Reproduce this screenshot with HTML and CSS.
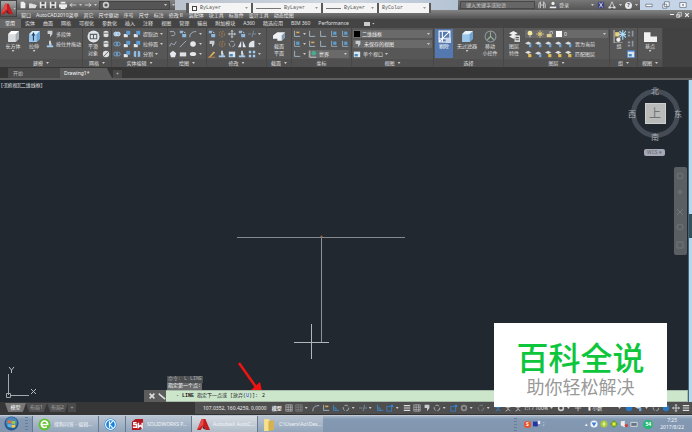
FILE: index.html
```
<!DOCTYPE html>
<html lang="zh-CN">
<head>
<meta charset="UTF-8">
<title>AutoCAD - Drawing1</title>
<link rel="stylesheet" href="styles.css">
</head>
<body>

<!-- 图标 -->
<svg class="symbols" xmlns="http://www.w3.org/2000/svg">
    <symbol id="cube" viewBox="0 0 12 12"><path d="M1 4l3-3h7v7l-3 3H1z" fill="#d9dde0"/><path d="M1 4l3-3h7L8 4z" fill="#fff"/><path d="M8 4l3-3v7l-3 3z" fill="#a9b0b6"/></symbol>
    <symbol id="bluecube" viewBox="0 0 12 12"><path d="M1 4l3-3h7v7l-3 3H1z" fill="#9cc7eb"/><path d="M1 4l3-3h7L8 4z" fill="#e8f4fc"/><path d="M8 4l3-3v7l-3 3z" fill="#6fa2d0"/></symbol>
    <symbol id="extrude" viewBox="0 0 12 12"><path d="M1 4l3-3h7v7l-3 3H1z" fill="#9cc7eb"/><path d="M1 4l3-3h7L8 4z" fill="#d8ecfa"/><path d="M8 4l3-3v7l-3 3z" fill="#6fa2d0"/><path d="M5 10V4M4 5l1-2 1 2" stroke="#1d3f66" fill="none"/></symbol>
    <symbol id="sphere" viewBox="0 0 12 12"><circle cx="6" cy="6" r="5.500" fill="#e4e7e8"/><path d="M3 4h6v4H3zM6 4v4" fill="none" stroke="#59626b"/></symbol>
    <symbol id="ball" viewBox="0 0 10 10"><path d="M2 2l3-1 3 1v6L5 9 2 8z" fill="#dedfdf"/><path d="M2 4h6" stroke="#555"/></symbol>
    <symbol id="noball" viewBox="0 0 10 10"><circle cx="5" cy="5" r="4" fill="#dedfdf"/><path d="M2 8l6-6" stroke="#555"/></symbol>
    <symbol id="polysolid" viewBox="0 0 10 10"><path d="M2 1h6v4L5 9V5H2z" fill="#c8cdd1"/></symbol>
    <symbol id="press" viewBox="0 0 10 10"><path d="M1 7h8v2H1zM4 4h3v3H4z" fill="#a9c9e6"/><path d="M5 1v4" stroke="#eee" stroke-width="2"/></symbol>
    <symbol id="union" viewBox="0 0 10 10"><circle cx="3.5" cy="5" r="2.5" fill="#9dc3e6" stroke="#d7e8f5"/><circle cx="6.5" cy="5" r="2.5" fill="#9dc3e6" stroke="#d7e8f5"/></symbol>
    <symbol id="rings" viewBox="0 0 10 10"><circle cx="3.5" cy="5" r="2.5" fill="none" stroke="#78aede"/><circle cx="6.5" cy="5" r="2.5" fill="none" stroke="#78aede"/></symbol>
    <symbol id="solid" viewBox="0 0 10 10"><path d="M1 5h5v4H1z" fill="#e4e4e4"/><path d="M4 1h5v5H4z" fill="#5d9bd4"/></symbol>
    <symbol id="split" viewBox="0 0 10 10"><path d="M1 2l3-1v8L1 8zM6 1l3 1v6L6 9z" fill="#8fbde5"/></symbol>
    <symbol id="curve" viewBox="0 0 10 10"><path d="M1 2h5a3 3 0 010 5H3" fill="none" stroke="#b5c3ce"/></symbol>
    <symbol id="spline" viewBox="0 0 10 10"><path d="M1 8C3-2 5 12 9 2" fill="none" stroke="#b5c3ce"/></symbol>
    <symbol id="line" viewBox="0 0 10 10"><path d="M1 9l8-8" stroke="#aebdca"/></symbol>
    <symbol id="arc" viewBox="0 0 10 10"><path d="M1 9c0-5 3-7 8-7" fill="none" stroke="#b9cbdc"/></symbol>
    <symbol id="disc" viewBox="0 0 10 10"><circle cx="5" cy="5" r="3.5" fill="#e6e9eb"/></symbol>
    <symbol id="oval" viewBox="0 0 10 10"><ellipse cx="5" cy="5" rx="4" ry="2.5" fill="#e6e9eb"/></symbol>
    <symbol id="rect" viewBox="0 0 10 10"><path d="M1 3h8v5H1z" fill="#dfe3e6"/></symbol>
    <symbol id="penta" viewBox="0 0 10 10"><path d="M5 1l4 3-1.500 5h-5L1 4z" fill="#e6e9eb"/></symbol>
    <symbol id="helix" viewBox="0 0 10 10"><path d="M1 1h4v3H1zM4 5h5v4H4z" fill="#8db9df"/><path d="M6 2l2 2" stroke="#ddd"/></symbol>
    <symbol id="move" viewBox="0 0 10 10"><path d="M5 0l2 2H3zM5 10l2-2H3zM0 5l2-2v4zM10 5L8 3v4z" fill="#dce5ec"/><path d="M5 2v6M2 5h6" stroke="#dce5ec"/></symbol>
    <symbol id="rotate" viewBox="0 0 10 10"><circle cx="5" cy="5" r="3.500" fill="none" stroke="#b6bfc6" stroke-dasharray="5 2"/></symbol>
    <symbol id="warm" viewBox="0 0 10 10"><circle cx="5" cy="5" r="3.500" fill="none" stroke="#9a7f55" stroke-dasharray="3 1"/><path d="M5 3v4" stroke="#cf7a3c"/></symbol>
    <symbol id="pencil" viewBox="0 0 10 10"><path d="M1 9l6-7 2 1-6 6z" fill="#e0b65c"/><path d="M0 9h9" stroke="#cf8a49"/></symbol>
    <symbol id="mirror" viewBox="0 0 10 10"><path d="M4 1v8H0zM6 1v8h4z" fill="#dfeaf4"/></symbol>
    <symbol id="fillet" viewBox="0 0 10 10"><path d="M1 9V7c0-4 3-6 7-6v8z" fill="#dfe5ea"/></symbol>
    <symbol id="array" viewBox="0 0 10 10"><path d="M1 1h3v3H1zM6 1h3v3H6zM1 6h3v3H1zM6 6h3v3H6z" fill="#a3cdf0"/></symbol>
    <symbol id="scale" viewBox="0 0 10 10"><path d="M1 2h8v7H1z" fill="#d9e6ef"/><path d="M2 5h4v3H2z" fill="#4a87bd"/></symbol>
    <symbol id="trim" viewBox="0 0 10 10"><path d="M0 5h4M6 5h4M7 1L5 9" stroke="#7d95a7" fill="none"/></symbol>
    <symbol id="section" viewBox="0 0 12 12"><path d="M0 5l4-3h7v5L8 10H4V8H0z" fill="#eff2f4"/><path d="M8 5l3-3v5l-3 3z" fill="#7f9aae"/></symbol>
    <symbol id="ucs" viewBox="0 0 10 10"><path d="M2 1v7h7" fill="none" stroke="#b0c4d3"/></symbol>
    <symbol id="ucsy" viewBox="0 0 10 10"><path d="M2 1v7h7" fill="none" stroke="#b0c4d3"/><path d="M4 2h4v2H4z" fill="#d9a957"/></symbol>
    <symbol id="ucsb" viewBox="0 0 10 10"><path d="M2 1v7h7" fill="none" stroke="#9eb6c8"/><path d="M4 2h4v4H4z" fill="#5b9fd2"/></symbol>
    <symbol id="world" viewBox="0 0 10 10"><path d="M1 1v8h8" fill="none" stroke="#ddd"/><circle cx="6" cy="4" r="3" fill="#4aa88d"/></symbol>
    <symbol id="cull" viewBox="0 0 12 12"><path d="M1 1h10v10H1zM1 11L11 1M4 1v10M1 8h10" fill="none" stroke="#fff"/><path d="M7 7h5v5H7z" fill="#c8d8ea"/></symbol>
    <symbol id="gizmo" viewBox="0 0 12 12"><circle cx="6" cy="6" r="5" fill="none" stroke="#8c969b"/><path d="M6 2v4l3 3M6 6L3 9" fill="none" stroke="#8fb39c"/></symbol>
    <symbol id="layers" viewBox="0 0 12 12"><path d="M1 3l4-2 4 2-4 2zM1 6l4-2 4 2-4 2z" fill="#f0f0f0"/><path d="M6 5h5v6H6z" fill="#ddd"/><path d="M7 7h3M7 9h3" stroke="#555"/></symbol>
    <symbol id="layer" viewBox="0 0 10 10"><path d="M0 4l4-2 4 2-4 2z" fill="#d7dce0"/><path d="M5 5h3v4H5z" fill="#6ea4d6"/></symbol>
    <symbol id="layery" viewBox="0 0 10 10"><path d="M0 3l4-2 4 2-4 2z" fill="#dedede"/><path d="M4 5h4v4H4z" fill="#dfbb56"/></symbol>
    <symbol id="bulb" viewBox="0 0 10 10"><circle cx="5" cy="4" r="3" fill="#f5e6a0"/><path d="M4 7h2v2H4z" fill="#aaa"/></symbol>
    <symbol id="sun" viewBox="0 0 10 10"><circle cx="5" cy="5" r="2" fill="#f7e490"/><path d="M5 0v10M0 5h10M2 2l6 6M8 2L2 8" stroke="#d8c677"/></symbol>
    <symbol id="lock" viewBox="0 0 10 10"><path d="M1 5h6v4H1z" fill="#e0cf8e"/><path d="M5 5V2h3v3" fill="none" stroke="#ccc"/></symbol>
    <symbol id="group" viewBox="0 0 12 12"><path d="M1 0v12h8" fill="none" stroke="#bbb"/><path d="M2 2h4v4H2z" fill="#ead17b"/><circle cx="5" cy="9" r="2" fill="#eee"/><path d="M9 0v9M5 4h7M6 1l6 6M12 1L6 7" stroke="#a9dcfb"/></symbol>
    <symbol id="ungroup" viewBox="0 0 10 10"><path d="M1 2h3v2H1zM1 6h3v2H1zM6 1h2v7H6z" fill="#8d9aa5"/></symbol>
    <symbol id="base" viewBox="0 0 12 12"><path d="M0 2h6v4h6v5H0z" fill="#f0f0f0"/></symbol>
    <symbol id="page" viewBox="0 0 10 10"><path d="M2 1h4l2 2v6H2z" fill="#eee"/></symbol>
    <symbol id="open" viewBox="0 0 10 10"><path d="M0 3h4l1 1h3v1h2L8 9H0z" fill="#ddd"/></symbol>
    <symbol id="save" viewBox="0 0 10 10"><path d="M1 1h8v8H1z" fill="#e8e8e8"/><path d="M3 1h4v3H3zM3 6h4v3H3z" fill="#555"/></symbol>
    <symbol id="print" viewBox="0 0 10 10"><path d="M0 4h10v4H0zM2 1h6v2H2zM2 7h6v3H2z" fill="#eee"/></symbol>
    <symbol id="undo" viewBox="0 0 10 10"><path d="M2 5h7M4 3L1 5l3 2" stroke="#ddd" fill="none"/></symbol>
    <symbol id="redo" viewBox="0 0 10 10"><path d="M1 5h7M6 3l3 2-3 2" stroke="#ddd" fill="none"/></symbol>
    <symbol id="cog" viewBox="0 0 10 10"><circle cx="5" cy="5" r="3" fill="none" stroke="#ccc" stroke-width="2"/></symbol>
    <symbol id="grid" viewBox="0 0 10 10"><path d="M1 1h8v8H1zM4 1v8M7 1v8M1 4h8M1 7h8" fill="none" stroke="#aaa"/></symbol>
    <symbol id="snap" viewBox="0 0 10 10"><path d="M1 3h6v6H1z" fill="none" stroke="#3287ce"/><path d="M6 1h3v3H6z" fill="#3287ce"/></symbol>
    <symbol id="ortho" viewBox="0 0 10 10"><path d="M2 1v7h7M2 5h3v3" fill="none" stroke="#3b8fd6"/></symbol>
    <symbol id="bars" viewBox="0 0 10 10"><path d="M1 2h8M1 5h8M1 8h8" stroke="#ddd" stroke-width="1.500"/></symbol>
    <symbol id="man" viewBox="0 0 10 10"><circle cx="5" cy="2" r="1.500" fill="#ccc"/><path d="M5 4v3L2 9M5 6l3 3M2 4h6" stroke="#ccc" fill="none"/></symbol>
    <symbol id="manb" viewBox="0 0 10 10"><circle cx="5" cy="2" r="1.500" fill="#2f91e6"/><path d="M5 4v3L2 9M5 6l3 3M2 4h6" stroke="#2f91e6" fill="none"/></symbol>
    <symbol id="bluedot" viewBox="0 0 10 10"><circle cx="5" cy="5" r="4" fill="#2878c4"/></symbol>
    <symbol id="plus" viewBox="0 0 10 10"><path d="M5 1v8M1 5h8" stroke="#ccc"/></symbol>
    <symbol id="cross" viewBox="0 0 10 10"><path d="M2 2l6 6M8 2L2 8" stroke="currentColor" stroke-width="2"/></symbol>
    <symbol id="wrench" viewBox="0 0 10 10"><path d="M1 2l2 2 6 5" stroke="#ddd" stroke-width="2" fill="none"/></symbol>
    <symbol id="acad" viewBox="0 0 14 14"><path d="M5 1h4l5 12h-4L7 8l-3 5H0z" fill="#c41d20"/><path d="M5 1h2v6l-7 6z" fill="#e6494a"/><path d="M7 8l3 5-4-2z" fill="#7d0d10"/></symbol>
</svg>

<header class="titlebar">
    <div class="quick">
        <svg class="ic"><use href="#page"/></svg>
        <svg class="ic"><use href="#open"/></svg>
        <svg class="ic"><use href="#save"/></svg>
        <svg class="ic"><use href="#save"/></svg>
        <svg class="ic"><use href="#print"/></svg>
        <svg class="ic"><use href="#undo"/></svg><i class="caret"></i>
        <svg class="ic"><use href="#redo"/></svg><i class="caret"></i>
        <div class="workspace"><svg class="ic"><use href="#cog"/></svg><i class="caret"></i></div>
        <i class="caret"></i>
    </div>
    <div class="glass"></div>
    <div class="account">
        <input class="search" type="text" placeholder="键入关键字或短语" aria-label="搜索">
        <svg class="ic" viewBox="0 0 10 10"><path d="M1 9V4l2-3v8M9 9V4L7 1v8M3 5h4" fill="none" stroke="#ddd"/></svg>
        <button class="login"><svg class="ic" viewBox="0 0 10 10"><circle cx="5" cy="3" r="2" fill="#eee"/><path d="M1 9V7h8v2z" fill="#eee"/></svg>登录</button>
        <i class="caret push"></i>
        <svg class="ic" viewBox="0 0 10 10"><path d="M1 1h8v8H1z" fill="#3d4380"/><path d="M3 2l4 6M7 2L3 8" stroke="#eee"/></svg>
        <svg class="ic" viewBox="0 0 10 10"><path d="M5 1L2 8h6z" fill="none" stroke="#ddd"/><circle cx="2" cy="8" r="1.500" fill="#ddd"/><circle cx="8" cy="8" r="1.500" fill="#ddd"/></svg>
        <i class="caret"></i>
        <span class="help">?</span>
        <i class="caret"></i>
    </div>
    <div class="winbtns">
        <button aria-label="最小化"><svg class="ic" viewBox="0 0 10 10"><path d="M1 4h8v3H1z" fill="#fff" stroke="#647386"/></svg></button>
        <button aria-label="还原"><svg class="ic" viewBox="0 0 10 10"><path d="M3 1h6v6H3zM1 4h5v5H1z" fill="#fff" stroke="#647386"/></svg></button>
        <button aria-label="关闭"><svg class="ic" viewBox="0 0 10 10"><path d="M1 2h8v6H1zM4 4l2 2M6 4L4 6" fill="#fff" stroke="#647386"/></svg></button>
    </div>
</header>
<button class="applogo" aria-label="应用程序菜单"><svg viewBox="0 0 14 14"><use href="#acad"/></svg><i class="caret"></i></button>

<!-- 浮动特性工具栏 -->
<div class="proptools">
    <label class="prop layer-color"><i class="swatch"></i><select aria-label="颜色"><option>ByLayer</option></select></label>
    <label class="prop linetype"><i class="rule"></i><select aria-label="线型"><option>ByLayer</option></select></label>
    <label class="prop lineweight"><i class="rule"></i><select aria-label="线宽"><option>ByLayer</option></select></label>
    <label class="prop plot"><select aria-label="打印样式"><option>ByColor</option></select></label>
</div>

<nav class="menubar">
    <a href="#">窗口</a><a href="#">AutoCAD2010菜单</a><a href="#">其它</a><a href="#">尺寸驱动</a><a href="#">序号</a><a href="#">尺寸</a><a href="#">标注</a><a href="#">修改Ⅱ</a><a href="#">装配体</a><a href="#">块工具</a><a href="#">标准件</a><a href="#">设计工具</a><a href="#">动态绘图</a>
    <span class="docbtns"><i class="min"></i><svg class="ic" viewBox="0 0 10 10"><path d="M3 1h6v6H3zM1 4h5v5H1z" fill="#777" stroke="#eee"/></svg><svg class="ic"><use href="#cross"/></svg></span>
</nav>

<nav class="tabs">
    <a class="active" href="#">常用</a><a href="#">实体</a><a href="#">曲面</a><a href="#">网格</a><a href="#">可视化</a><a href="#">参数化</a><a href="#">插入</a><a href="#">注释</a><a href="#">视图</a><a href="#">管理</a><a href="#">输出</a><a href="#">附加模块</a><a href="#">A360</a><a href="#">精选应用</a><a href="#">BIM 360</a><a href="#">Performance</a>
    <span class="pill"></span><i class="caret"></i>
</nav>

<main class="ribbon">
    <section class="panel p-model">
        <div class="tools">
            <button class="big"><svg><use href="#cube"/></svg>长方体<i class="caret"></i></button>
            <button class="big"><svg><use href="#extrude"/></svg>拉伸<i class="caret"></i></button>
            <div class="col">
                <button class="tool"><svg class="ic"><use href="#polysolid"/></svg>多段体</button>
                <button class="tool"><svg class="ic"><use href="#press"/></svg>按住并拖动</button>
            </div>
        </div>
        <h2>建模<i class="caret"></i></h2>
    </section>
    <section class="panel p-mesh">
        <div class="tools">
            <button class="big"><svg><use href="#sphere"/></svg>平滑<br>对象</button>
            <div class="col">
                <svg class="ic"><use href="#ball"/></svg>
                <svg class="ic"><use href="#ball"/></svg>
                <svg class="ic"><use href="#noball"/></svg>
            </div>
        </div>
        <h2>网格<i class="caret"></i></h2>
    </section>
    <section class="panel p-solid">
        <div class="tools">
            <div class="col"><svg class="ic"><use href="#union"/></svg><svg class="ic"><use href="#rings"/></svg><svg class="ic"><use href="#rings"/></svg></div>
            <div class="col"><svg class="ic"><use href="#solid"/></svg><svg class="ic"><use href="#solid"/></svg><svg class="ic"><use href="#solid"/></svg></div>
            <div class="col">
                <button class="tool"><svg class="ic"><use href="#solid"/></svg>提取边<i class="caret"></i></button>
                <button class="tool"><svg class="ic"><use href="#solid"/></svg>拉伸面<i class="caret"></i></button>
                <button class="tool"><svg class="ic"><use href="#split"/></svg>分割<i class="caret"></i></button>
            </div>
        </div>
        <h2>实体编辑<i class="caret"></i></h2>
    </section>
    <section class="panel p-draw">
        <div class="tools">
            <div class="col"><svg class="ic"><use href="#curve"/></svg><svg class="ic"><use href="#spline"/></svg><svg class="ic"><use href="#penta"/></svg></div>
            <div class="col"><svg class="ic"><use href="#helix"/></svg><svg class="ic"><use href="#line"/></svg><svg class="ic"><use href="#rect"/></svg></div>
            <div class="col"><svg class="ic"><use href="#arc"/></svg><svg class="ic"><use href="#disc"/></svg><svg class="ic"><use href="#oval"/></svg></div>
            <div class="col carets"><i class="caret"></i><i class="caret"></i><i class="caret"></i></div>
        </div>
        <h2>绘图<i class="caret"></i></h2>
    </section>
    <section class="panel p-modify">
        <div class="tools">
            <div class="col"><svg class="ic"><use href="#helix"/></svg><svg class="ic"><use href="#polysolid"/></svg><svg class="ic"><use href="#pencil"/></svg></div>
            <div class="col"><svg class="ic"><use href="#warm"/></svg><svg class="ic"><use href="#warm"/></svg><svg class="ic"><use href="#press"/></svg></div>
            <div class="col"><svg class="ic"><use href="#move"/></svg><svg class="ic"><use href="#rotate"/></svg><svg class="ic"><use href="#scale"/></svg></div>
            <div class="col"><svg class="ic"><use href="#helix"/></svg><svg class="ic"><use href="#mirror"/></svg><svg class="ic"><use href="#press"/></svg></div>
            <div class="col"><svg class="ic"><use href="#trim"/></svg><svg class="ic"><use href="#fillet"/></svg><svg class="ic"><use href="#array"/></svg></div>
            <div class="col carets"><i class="caret"></i><i class="caret"></i><i class="caret"></i></div>
        </div>
        <h2>修改<i class="caret"></i></h2>
    </section>
    <section class="panel p-section">
        <div class="tools"><button class="big"><svg><use href="#section"/></svg>截面<br>平面</button></div>
        <h2>截面<i class="caret"></i></h2>
    </section>
    <section class="panel p-ucs">
        <div class="tools">
            <div class="col"><svg class="ic"><use href="#ucsy"/></svg><svg class="ic"><use href="#ucsb"/></svg><svg class="ic"><use href="#ucs"/></svg></div>
            <div class="col carets"><i class="caret"></i><i class="caret"></i><i class="caret"></i></div>
            <div class="col">
                <div class="icons"><svg class="ic"><use href="#ucs"/></svg><svg class="ic"><use href="#ucs"/></svg><svg class="ic"><use href="#ucsb"/></svg><svg class="ic"><use href="#ucsb"/></svg></div>
                <div class="icons"><svg class="ic"><use href="#ucsy"/></svg><svg class="ic"><use href="#ucs"/></svg><svg class="ic"><use href="#ucsb"/></svg><svg class="ic"><use href="#ucsb"/></svg></div>
                <label class="combo"><svg class="ic"><use href="#world"/></svg><select aria-label="坐标系"><option>世界</option></select><i class="caret"></i></label>
            </div>
        </div>
        <h2>坐标</h2>
    </section>
    <section class="panel p-view">
        <div class="tools">
            <div class="col">
                <label class="combo"><i class="black"></i><select aria-label="视觉样式"><option>二维线框</option></select><i class="caret"></i></label>
                <label class="combo"><svg class="ic"><use href="#polysolid"/></svg><select aria-label="视图"><option>未保存的视图</option></select><i class="caret"></i></label>
                <button class="tool"><svg class="ic"><use href="#scale"/></svg>单个视口<i class="caret"></i></button>
            </div>
        </div>
        <h2>视图<i class="caret"></i></h2>
    </section>
    <section class="panel p-select">
        <div class="tools">
            <button class="big on"><svg><use href="#cull"/></svg>剔除</button>
            <button class="big"><svg><use href="#bluecube"/></svg>无过滤器<i class="caret"></i></button>
            <button class="big"><svg><use href="#gizmo"/></svg>移动<br>小控件</button>
        </div>
        <h2>选择</h2>
    </section>
    <section class="panel p-layer">
        <div class="tools">
            <button class="big"><svg><use href="#layers"/></svg>图层<br>特性</button>
            <div class="col">
                <label class="combo"><svg class="ic"><use href="#bulb"/></svg><svg class="ic"><use href="#sun"/></svg><svg class="ic"><use href="#lock"/></svg><i class="white"></i><select aria-label="图层"><option>0</option></select><i class="caret"></i></label>
                <div class="icons"><svg class="ic"><use href="#layer"/></svg><svg class="ic"><use href="#layer"/></svg><svg class="ic"><use href="#layer"/></svg><svg class="ic"><use href="#layer"/></svg><button class="tool"><svg class="ic"><use href="#layer"/></svg>置为当前</button></div>
                <div class="icons"><svg class="ic"><use href="#layery"/></svg><svg class="ic"><use href="#layer"/></svg><svg class="ic"><use href="#layery"/></svg><svg class="ic"><use href="#layery"/></svg><button class="tool"><svg class="ic"><use href="#layery"/></svg>匹配图层</button></div>
            </div>
        </div>
        <h2>图层<i class="caret"></i></h2>
    </section>
    <section class="panel p-group">
        <div class="tools">
            <button class="big"><svg><use href="#group"/></svg>组</button>
            <div class="col"><svg class="ic"><use href="#ungroup"/></svg><svg class="ic"><use href="#ungroup"/></svg><svg class="ic lit"><use href="#scale"/></svg></div>
        </div>
        <h2>组<i class="caret"></i></h2>
    </section>
    <section class="panel p-base">
        <div class="tools"><button class="big"><svg><use href="#base"/></svg>基点<i class="caret"></i></button></div>
        <h2>视图<i class="caret"></i></h2>
    </section>
</main>

<nav class="filetabs">
    <a href="#">开始</a>
    <a class="active" href="#">Drawing1*</a>
    <button class="addtab" aria-label="新图形">+</button>
</nav>

<!-- 绘图区 -->
<div class="canvas">
    <span class="viewlabel">[-][俯视][二维线框]</span>
    <svg class="drawing" viewBox="0 0 692 323">
        <path d="M237 158.500h168" stroke="#858a8e"/>
        <path d="M321.500 157v106" stroke="#8d9296"/>
        <path d="M294 263.500h35M311.500 245v35" stroke="#b3b7ba"/>
        <circle cx="321.500" cy="157.500" r="1" fill="#a8653f"/>
        <path d="M8.500 295v21M11 316.500h18M6.500 314.500h4v4h-4z" stroke="#a5a9ad" fill="none"/>
        <path d="M9 288l2.500 3 2.500-3M11.500 291v3M31 310l5 5M36 310l-5 5" stroke="#b9bcbf" fill="none"/>
        <path d="M239 284l17 24" stroke="#f01410" stroke-width="2.500"/>
        <path d="M263 317l-12-6 9-8z" fill="#f01410"/>
    </svg>
    <div class="viewcube">
        <i class="ring"></i>
        <span class="n">北</span><span class="w">西</span><button class="top">上</button><span class="e">东</span><span class="s">南</span>
    </div>
    <button class="wcs">WCS ▾</button>
    <div class="navbar"><svg viewBox="0 0 12 88"><path d="M3 9a3 3 0 116 0 3 3 0 11-6 0M3 25h6M6 22v6M3 42l6 6M9 42l-6 6M3 60a3 3 0 116 0 3 3 0 11-6 0M3 75h6v6H3z" fill="none" stroke="#71767b"/></svg></div>
    <div class="scroll"><i></i></div>
    <div class="history"><span>命令: L LINE</span><span>指定第一个点:</span></div>
    <div class="command">
        <div class="grip"><svg class="ic"><use href="#cross"/></svg><svg class="ic"><use href="#wrench"/></svg></div>
        <label for="cmd">- <b>LINE</b> 指定下一点或 [放弃(<em>U</em>)]:</label>
        <input id="cmd" type="text" value="2">
    </div>
</div>

<footer class="statusbar">
    <nav class="layouts"><a class="active" href="#">模型</a><a href="#">布局1</a><a href="#">布局2</a><button aria-label="新建布局">+</button></nav>
    <div class="status">
        <span class="coords">107.0352, 160.4259, 0.0000</span>
        <button class="model">模型</button>
        <svg class="ic"><use href="#grid"/></svg><svg class="ic dim"><use href="#grid"/></svg><i class="caret"></i>
        <svg class="ic"><use href="#arc"/></svg><svg class="ic"><use href="#ucsy"/></svg>
        <svg class="ic"><use href="#ortho"/></svg><svg class="ic"><use href="#rotate"/></svg><i class="caret"></i>
        <svg class="ic"><use href="#trim"/></svg><i class="caret"></i>
        <svg class="ic"><use href="#ortho"/></svg><svg class="ic"><use href="#snap"/></svg><i class="caret"></i>
        <svg class="ic"><use href="#bars"/></svg><svg class="ic"><use href="#grid"/></svg><svg class="ic"><use href="#polysolid"/></svg><svg class="ic"><use href="#rotate"/></svg><i class="caret"></i>
        <svg class="ic"><use href="#snap"/></svg><svg class="ic dim"><use href="#cog"/></svg><i class="caret"></i><svg class="ic dim"><use href="#rotate"/></svg><i class="caret"></i>
        <svg class="ic"><use href="#manb"/></svg><svg class="ic"><use href="#man"/></svg><svg class="ic"><use href="#man"/></svg>
        <span>1:1 / 100%</span><i class="caret"></i>
        <svg class="ic"><use href="#cog"/></svg><i class="caret"></i><svg class="ic"><use href="#plus"/></svg>
        <span class="units">▮ 小数</span><i class="caret push"></i>
        <svg class="ic"><use href="#bluedot"/></svg><svg class="ic"><use href="#layer"/></svg><i class="caret"></i><svg class="ic"><use href="#rotate"/></svg><svg class="ic"><use href="#bluedot"/></svg><svg class="ic"><use href="#move"/></svg><svg class="ic"><use href="#bars"/></svg>
    </div>
</footer>

<div class="taskbar">
    <button class="start" aria-label="开始"><svg viewBox="0 0 16 16"><circle cx="8" cy="8" r="7.500" fill="#28588b"/><circle cx="8" cy="7" r="6" fill="#4c86b8"/><path d="M4 5q2-1 3.500 0v3Q6 7 4 8z" fill="#ef6b35"/><path d="M8 5q2 1 4 0v3q-2 1-4 0z" fill="#9ccc4b"/><path d="M4 9q2-1 3.500 0v3Q6 11 4 12z" fill="#57b4ec"/><path d="M8 9q2 1 4 0v3q-2 1-4 0z" fill="#f7cf46"/></svg></button>
    <i class="dots"></i>
    <button class="task"><svg viewBox="0 0 12 12"><circle cx="6" cy="6" r="5.500" fill="#5fc32f"/><path d="M3 6h6a3 3 0 10-1 2" fill="none" stroke="#fff" stroke-width="1.500"/></svg>搜狗问答 - 编辑...</button>
    <button class="task pinned"><svg viewBox="0 0 12 12"><circle cx="6" cy="6" r="5.500" fill="#1683e0"/><circle cx="6" cy="6" r="4.500" fill="none" stroke="#fff"/><path d="M5 3v6M8 3L5 6l3 3" fill="none" stroke="#fff"/></svg></button>
    <button class="task"><svg viewBox="0 0 14 12"><path d="M1 3l4-3h8v8l-3 4H1z" fill="#b31820"/><path d="M6 4H3v2h3v3H2M8 4v5l2-2 2 2V4" fill="none" stroke="#fff" stroke-width="1.500"/></svg>SOLIDWORKS P...</button>
    <button class="task lit"><svg viewBox="0 0 14 14"><use href="#acad"/></svg>Autodesk AutoC...</button>
    <button class="task"><svg viewBox="0 0 12 12"><path d="M1 1h5v11H1z" fill="#f6e08d"/><path d="M5 3l5-1v9l-5 1z" fill="#d5b24e"/></svg>C:\Users\Ao\Des...</button>
    <div class="tray">
        <i class="dots"></i>
        <span class="lang">S</span>
        <svg class="ic" viewBox="0 0 10 10"><path d="M0 2h6v6H0z" fill="#2435a8"/><path d="M6 1h3v4H6z" fill="#e9eef8"/></svg>
        <span>⁝</span>
        <span class="push">▴</span>
        <svg class="ic" viewBox="0 0 10 10"><circle cx="5" cy="5" r="4.500" fill="#eef3f8"/><path d="M2 3l3 5 3-5z" fill="#3f7bda"/></svg>
        <svg class="ic" viewBox="0 0 10 10"><circle cx="5" cy="5" r="4.500" fill="#a7c933"/><path d="M5 2v6M3 5h4" stroke="#fff"/></svg>
        <svg class="ic" viewBox="0 0 10 10"><path d="M5 0l5 5-5 5-5-5z" fill="#58a524"/><path d="M3 3h4v4H3z" fill="#f2e34c"/></svg>
        <svg class="ic" viewBox="0 0 10 10"><path d="M1 2l5-1v8L1 7z" fill="#eee"/><circle cx="8" cy="7" r="2" fill="#d13a36"/></svg>
        <svg class="ic" viewBox="0 0 10 10"><path d="M1 3h8v5H1z" fill="#6b7683" stroke="#e5e9ee"/></svg>
        <span class="score">54</span>
        <time>7:25<br>2017/8/22</time>
    </div>
</div>

<div class="watermark">
    <strong>百科全说</strong>
    <span>助你轻松解决</span>
</div>

</body>
</html>
```

FILE: styles.css
```
* {
box-sizing: border-box;
}

body {
margin: 0;
height: 100vh;
display: flex;
flex-direction: column;
position: relative;
overflow: hidden;
background: #212830;
color: #e0e0e0;
font-family: "Noto Sans", "Noto Sans CJK SC", sans-serif;
font-size: 5px;
line-height: 8px;
white-space: nowrap;
}

a {
color: inherit;
text-decoration: none;
}

button, select, input {
margin: 0;
padding: 0;
border: none;
background: none;
color: inherit;
font: inherit;
appearance: none;
outline: none;
}

h2 {
margin: 0;
font-size: 5px;
font-weight: normal;
line-height: 8px;
}

.symbols {
position: absolute;
width: 0;
height: 0;
}

.ic {
width: 8px;
height: 8px;
flex: none;
}

.dim {
opacity: 0.5;
}

.push {
margin-left: auto;
}

.caret {
flex: none;
width: 3px;
height: 2px;
background: #c8c8c8;
clip-path: polygon(0 0, 100% 0, 50% 100%);
}

/* 标题栏 */
.titlebar {
display: flex;
flex: none;
height: 10px;
background: #606060;
}

.quick {
display: flex;
align-items: center;
gap: 2px;
width: 175px;
padding-left: 19px;
background: linear-gradient(#868686, #585858);
}

.workspace {
display: flex;
align-items: center;
justify-content: space-between;
flex: 1;
height: 9px;
padding: 0 2px;
border: 1px solid #444;
background: #555;
}

.glass {
flex: 1;
background: linear-gradient(90deg, #b9c2cd, #d0d8e2 60%, #b4c3d4);
}

.account {
display: flex;
align-items: center;
gap: 3px;
width: 182px;
padding: 0 2px;
background: linear-gradient(#777, #555);
}

.search {
width: 75px;
height: 8px;
padding-left: 5px;
background: #666;
border: 1px solid #484848;
}

.search::placeholder {
color: #ccc;
}

.login {
display: flex;
gap: 2px;
}

.help {
width: 7px;
height: 7px;
border-radius: 4px;
background: #e8e8e8;
color: #35435a;
font-weight: bold;
line-height: 7px;
text-align: center;
}

.winbtns {
display: flex;
width: 52px;
justify-content: space-around;
background: #c5d5e7;
}

.winbtns button {
display: flex;
align-items: center;
}

.applogo {
position: absolute;
left: 0;
top: 0;
width: 17px;
height: 17px;
display: flex;
align-items: center;
background: linear-gradient(#aaa, #555);
border: 1px solid #444;
}

.applogo svg {
width: 12px;
height: 12px;
}

/* 浮动工具栏 */
.proptools {
position: absolute;
left: 186px;
top: 3px;
display: flex;
gap: 2px;
padding: 0 2px 0 3px;
background: #5a5a5a;
color: #555;
font-family: "Liberation Mono", monospace;
}

.prop {
display: flex;
align-items: center;
gap: 3px;
height: 10px;
padding: 0 3px;
background: #f4f4f4;
}

.prop select {
flex: 1;
min-width: 0;
}

.prop::after {
content: "";
width: 3px;
height: 2px;
background: #999;
clip-path: polygon(0 0, 100% 0, 50% 100%);
}

.swatch {
width: 5px;
height: 5px;
border: 1px solid #444;
background: #fff;
}

.rule {
width: 25px;
height: 1px;
background: #777;
}

.layer-color {
width: 62px;
}

.linetype {
width: 68px;
}

.lineweight {
width: 54px;
}

.lineweight .rule {
width: 15px;
}

.plot {
width: 50px;
}

/* 菜单栏 */
.menubar {
display: flex;
align-items: center;
gap: 5px;
flex: none;
height: 9px;
padding-left: 21px;
background: linear-gradient(#848484, #505050);
color: #eee;
}

.docbtns {
display: flex;
align-items: center;
gap: 2px;
margin-left: auto;
padding-right: 2px;
}

.docbtns .ic {
width: 6px;
height: 6px;
}

.min {
width: 4px;
height: 1px;
background: #eee;
}

/* 功能区选项卡 */
.tabs {
display: flex;
align-items: center;
flex: none;
height: 9px;
background: #444;
}

.tabs a {
padding: 0 4px;
height: 9px;
}

.tabs .active {
padding: 0 6px 0 5px;
background: #666;
color: #fff;
}

.pill {
width: 6px;
height: 4px;
margin: 0 2px 0 11px;
background: #ccc;
}

/* 功能区 */
.ribbon {
display: flex;
flex: none;
background: #424242;
}

.panel {
flex: none;
background: #575757;
border-right: 1px solid #474747;
}

.panel h2 {
display: flex;
align-items: center;
justify-content: center;
gap: 3px;
background: #505050;
}

.tools {
display: flex;
height: 31px;
padding: 1px;
gap: 2px;
}

.col {
display: flex;
flex-direction: column;
gap: 2px;
padding-top: 1px;
}

.carets {
gap: 8px;
padding-top: 4px;
}

.icons {
display: flex;
gap: 2px;
}

.tool {
display: flex;
align-items: center;
gap: 2px;
height: 8px;
}

.big {
display: flex;
flex-direction: column;
align-items: center;
flex: none;
line-height: 7px;
padding-top: 1px;
min-width: 18px;
}

.big svg {
width: 13px;
height: 13px;
flex: none;
}

.on {
background: #5478b0;
color: #fff;
}

.ic.lit {
background: #4a7dbd;
}

.combo {
display: flex;
align-items: center;
gap: 2px;
height: 8px;
padding: 0 2px 0 1px;
background: #6a6a6a;
border-radius: 1px;
color: #f0f0f0;
}

.combo select {
flex: 1;
min-width: 0;
}

.black, .white {
width: 6px;
height: 6px;
background: #000;
}

.white {
background: #fff;
}

.p-model { width: 83px; }
.p-model .tools { padding-left: 4px; }
.p-model .tools { gap: 3px; }
.p-mesh { width: 29px; }
.p-mesh .tools { gap: 0; }
.p-solid { width: 56px; }
.p-draw { width: 39px; }
.p-modify { width: 60px; }
.p-section { width: 25px; }
.p-section .tools { padding-left: 3px; }
.p-ucs { width: 60px; }
.p-ucs .icons { gap: 3px; }
.p-view { width: 82px; }
.p-view .col { flex: 1; }
.p-select { width: 70px; }
.p-select .tools { gap: 4px; }
.p-layer { width: 106px; }
.p-layer .col { flex: 1; }
.p-group { width: 28px; }
.p-group .tools { gap: 0; }
.p-group .big { min-width: 16px; }
.p-base { width: 25px; }
.p-base .tools { padding-left: 3px; }

/* 文件选项卡 */
.filetabs {
display: flex;
align-items: flex-end;
flex: none;
height: 13px;
padding-left: 8px;
background: #363636;
border-bottom: 2px solid #5e5e5e;
color: #bbb;
}

.filetabs a {
width: 52px;
height: 10px;
padding-left: 5px;
line-height: 10px;
background: #4a4a4a;
}

.filetabs .active {
padding-left: 4px;
margin-right: 1px;
background: #5e5e5e;
color: #fff;
clip-path: polygon(0 0, 90% 0, 100% 100%, 0 100%);
}

.addtab {
width: 9px;
background: #4a4a4a;
}

/* 绘图区 */
.canvas {
flex: 1;
position: relative;
background: #212830;
}

.viewlabel {
position: absolute;
left: 1px;
top: 1px;
}

.drawing {
position: absolute;
left: 0;
top: -1px;
width: 692px;
height: 323px;
}

.viewcube {
position: absolute;
right: 9px;
top: 5px;
width: 56px;
height: 57px;
display: grid;
grid-template-columns: 10px 1fr 10px;
grid-template-rows: 11px 1fr 11px;
place-items: center;
font-size: 8px;
color: #adb1b5;
}

.ring {
position: absolute;
left: 4px;
top: 4px;
width: 49px;
height: 49px;
border: 5px solid #464c55;
border-radius: 50%;
}

.viewcube span {
z-index: 1;
}

.n, .s {
grid-column: 1 / 4;
}

.top {
width: 21px;
height: 21px;
background: #b9bbbb;
border: 1px solid #cdcfcf;
color: #707476;
font-size: 12px;
line-height: 18px;
}

.wcs {
position: absolute;
right: 27px;
top: 69px;
width: 21px;
height: 7px;
line-height: 7px;
border-radius: 2px;
background: #a6a9b5;
color: #63666f;
}

.navbar {
position: absolute;
right: 5px;
top: 87px;
width: 13px;
height: 88px;
background: #5a5f64;
border-radius: 2px;
}

.navbar svg {
width: 12px;
height: 88px;
}

.scroll {
position: absolute;
right: 0;
top: 0;
bottom: 0;
width: 4px;
background: #b6d8ea;
border-left: 1px solid #3f6580;
}

.scroll i {
display: block;
margin-top: 134px;
height: 24px;
background: #385058;
}

.history {
position: absolute;
left: 167px;
bottom: 12px;
display: flex;
flex-direction: column;
align-items: flex-start;
line-height: 7px;
font-family: "Liberation Mono", "Noto Sans CJK SC", monospace;
}

.history span {
padding: 0 1px;
background: #4c4f52;
color: #aaa;
}

.history span + span {
background: #686a6c;
color: #fff;
}

.command {
position: absolute;
left: 144px;
right: 4px;
bottom: 0;
display: flex;
align-items: center;
height: 12px;
background: #cce6cc;
border: 1px solid #a9bcaa;
border-left: none;
color: #111;
font-family: "Liberation Mono", "Noto Sans CJK SC", monospace;
}

.grip {
display: flex;
align-items: center;
gap: 2px;
width: 22px;
height: 12px;
padding-left: 4px;
margin-right: 10px;
background: #5c5c5c;
color: #ddd;
}

.command em {
font-style: normal;
color: #3434d0;
}

.command input {
margin-left: 4px;
width: 80px;
}

/* 状态栏 */
.statusbar {
display: flex;
flex: none;
height: 13px;
background: #363636;
}

.layouts {
display: flex;
width: 195px;
padding: 1px 0 3px 5px;
color: #aaa;
}

.layouts a {
width: 21px;
text-align: center;
background: #505050;
clip-path: polygon(0 0, 100% 0, 85% 100%, 15% 100%);
}

.layouts .active {
background: #777;
color: #fff;
}

.layouts button {
width: 8px;
background: #4a4a4a;
}

.status {
display: flex;
align-items: center;
flex: 1;
gap: 2px;
padding: 0 2px 0 8px;
background: #4e4e4e;
border-bottom: 1px solid #333;
color: #eee;
}

.status .caret {
margin-right: 2px;
}

.model {
margin: 0 1px 0 3px;
font-weight: bold;
}

.units {
margin-left: 4px;
}

/* 任务栏 */
.taskbar {
display: flex;
flex: none;
height: 17px;
background: linear-gradient(#a6b7c8, #8499b3 20%, #8195af);
border-top: 1px solid #c0cbd7;
color: #f2f5f8;
}

.start {
width: 23px;
text-align: center;
}

.start svg {
width: 15px;
height: 15px;
}

.dots {
width: 3px;
height: 13px;
margin: 1px 2px;
background: repeating-linear-gradient(#6b7d94 0 1px, transparent 1px 3px);
}

.task {
display: flex;
align-items: center;
gap: 3px;
width: 66px;
padding-left: 5px;
overflow: hidden;
border-left: 1px solid #67798f;
background: linear-gradient(#b8c4d1, #92a5bb);
}

.task svg {
width: 13px;
height: 13px;
flex: none;
}

.pinned {
width: 27px;
}

.task.lit {
background: linear-gradient(#d5dce3, #b2bdc9);
}

.start + .dots {
margin-right: 4px;
}

.tray {
display: flex;
align-items: center;
gap: 2px;
margin-left: auto;
width: 180px;
padding-right: 8px;
}

.lang, .score {
width: 7px;
height: 7px;
border-radius: 3px;
background: #e7552d;
color: #fff;
font-weight: bold;
line-height: 7px;
text-align: center;
}

.lang {
margin-left: 3px;
}

.score {
width: 10px;
height: 9px;
margin-left: 3px;
border-radius: 5px;
background: #27b877;
line-height: 9px;
}

.tray time {
margin-left: 5px;
line-height: 7px;
text-align: center;
}

/* 右下角标志 */
.watermark {
position: absolute;
right: 25px;
bottom: 25px;
width: 173px;
height: 84px;
display: flex;
flex-direction: column;
align-items: center;
background: #fff;
font-family: "Noto Sans CJK SC", sans-serif;
color: #999;
}

.watermark strong {
margin-top: 15px;
color: #0dc63c;
font-size: 32px;
font-weight: 500;
line-height: 36px;
}

.watermark span {
font-size: 18px;
line-height: 24px;
}
```
